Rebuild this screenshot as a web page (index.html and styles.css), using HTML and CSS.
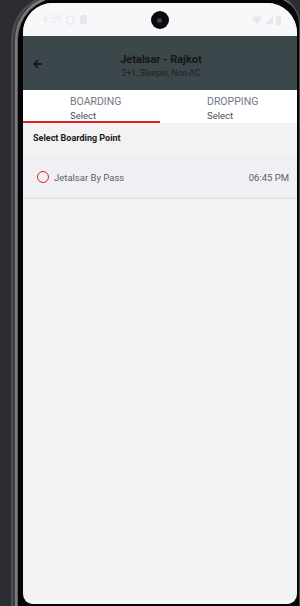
FILE: index.html
```html
<!DOCTYPE html>
<html lang="en">
  <head>
    <meta charset="UTF-8" />
    <meta name="viewport" content="width=device-width, initial-scale=1.0" />
    <title>Boarding Point</title>
    <link rel="stylesheet" href="styles.css">
  </head>
  <body>
    <div class="phone">
      <div class="ring">
        <div class="bezel">
          <div class="screen">
            <div class="status-bar">
              <div class="status-left">
                <span class="clock">4:39</span>
                <svg width="9" height="10" viewBox="0 0 9 10">
                  <path d="M4.5 0.8 L8 2.2 V5 C8 7.2 6.4 8.7 4.5 9.3 C2.6 8.7 1 7.2 1 5 V2.2 Z" fill="none" stroke="#e6e8ec" stroke-width="1.3" />
                </svg>
                <svg width="7" height="9" viewBox="0 0 7 9">
                  <path d="M2 0 H7 V9 H0 V2 Z" fill="#e6e8ec" />
                </svg>
              </div>
              <div class="camera"><span></span></div>
              <div class="status-right">
                <svg width="10" height="8" viewBox="0 0 10 8">
                  <path d="M0 2 C3 -0.6 7 -0.6 10 2 L5 8 Z" fill="#e6e8ec" />
                </svg>
                <svg width="8" height="8" viewBox="0 0 8 8">
                  <path d="M8 0 V8 H0 Z" fill="#e6e8ec" />
                </svg>
                <svg width="5" height="10" viewBox="0 0 5 10">
                  <rect x="0" y="1" width="5" height="9" rx="1" fill="#e6e8ec" />
                  <rect x="1.5" y="0" width="2" height="1.5" fill="#e6e8ec" />
                </svg>
              </div>
            </div>

            <div class="header">
              <svg class="back" width="10" height="10" viewBox="0 0 10 10">
                <path d="M9 5 H1.5 M5 1.2 L1.2 5 L5 8.8" fill="none" stroke="#111" stroke-width="1.5" />
              </svg>
              <div class="route">
                <div class="route-name">Jetalsar - Rajkot</div>
                <div class="bus-type">2+1, Sleeper, Non-AC</div>
              </div>
            </div>

            <div class="tabs">
              <div class="tab active">
                <div class="tab-title">BOARDING</div>
                <div class="tab-value">Select</div>
              </div>
              <div class="tab">
                <div class="tab-title">DROPPING</div>
                <div class="tab-value">Select</div>
              </div>
            </div>

            <div class="content">
              <div class="section-title">Select Boarding Point</div>
              <div class="point">
                <span class="radio"></span>
                <span class="point-name">Jetalsar By Pass</span>
                <span class="point-time">06:45 PM</span>
              </div>
            </div>

            <div class="nav-bar"></div>
          </div>
        </div>
      </div>
    </div>
  </body>
</html>
```

FILE: styles.css
```css
body {
  margin: 0;
  height: 606px;
  overflow: hidden;
  background-color: #2b2d33;
  font-family: Roboto, "Liberation Sans", sans-serif;
}

.phone {
  box-sizing: border-box;
  margin-left: 11px;
  margin-top: -6px;
  width: 289px;
  height: 612px;
  border-radius: 46px 30px 0 0;
  background-color: #4c4c4e;
  padding: 2px 1px 0 2px;
}

.ring {
  box-sizing: border-box;
  height: 100%;
  border-radius: 44px 28px 0 0;
  background-color: #7b7b7d;
  padding: 2px 0 0 2px;
  border-left: 2px solid #3e3e40;
}

.bezel {
  box-sizing: border-box;
  height: 100%;
  border-radius: 42px 26px 0 0;
  background-color: #050505;
  padding: 5px 2px 2px 5px;
  border-left: 1px solid #5a5a5c;
}

.screen {
  height: 100%;
  border-radius: 30px 30px 10px 10px;
  overflow: hidden;
  background-color: #f2f2f2;
  display: flex;
  flex-direction: column;
}

.status-bar {
  flex-shrink: 0;
  height: 33px;
  background-color: #f7f8fa;
  display: flex;
  align-items: center;
  justify-content: space-between;
  padding: 0 16px 0 19px;
  position: relative;
}

.status-left,
.status-right {
  display: flex;
  align-items: center;
  gap: 5px;
}

.status-right {
  gap: 3px;
}

.clock {
  font-size: 10px;
  color: #e6e8ec;
}

.camera {
  position: absolute;
  left: 128px;
  top: 8px;
  width: 18px;
  height: 18px;
  border-radius: 50%;
  background-color: #0b0b0d;
}

.camera span {
  position: absolute;
  left: 6px;
  top: 7px;
  width: 5px;
  height: 5px;
  border-radius: 50%;
  background-color: #3d3a5c;
}

.header {
  flex-shrink: 0;
  box-sizing: border-box;
  height: 54px;
  padding-top: 4px;
  background-color: #3c474b;
  display: flex;
  align-items: center;
  position: relative;
}

.back {
  position: absolute;
  left: 10px;
  top: 23px;
}

.route {
  flex: 1;
  text-align: center;
  padding-left: 2px;
}

.route-name {
  font-size: 11px;
  font-weight: bold;
  color: #151515;
}

.bus-type {
  margin-top: 2px;
  font-size: 8.5px;
  color: #222;
}

.tabs {
  flex-shrink: 0;
  display: flex;
  height: 33px;
  background-color: #fff;
}

.tab {
  flex: 1;
  padding: 5px 0 0 47px;
  box-sizing: border-box;
}

.tab.active {
  border-bottom: 2px solid #e21f26;
}

.tab-title {
  font-size: 10.5px;
  color: #6f7885;
}

.tab-value {
  margin-top: 2px;
  font-size: 9.5px;
  color: #4a4f57;
}

.content {
  flex: 1;
  padding-top: 10px;
}

.section-title {
  padding-left: 10px;
  font-size: 9px;
  font-weight: bold;
  color: #1a1a1a;
}

.point {
  margin-top: 14px;
  height: 40px;
  background-color: #efeff4;
  border-bottom: 2px solid #e4e4e8;
  display: flex;
  align-items: center;
  padding: 0 8px 0 14px;
}

.radio {
  width: 10px;
  height: 10px;
  border: 1.5px solid #e21f26;
  border-radius: 50%;
}

.point-name {
  margin-left: 5px;
  font-size: 9.5px;
  color: #5d5f66;
  flex: 1;
}

.point-time {
  font-size: 9.5px;
  color: #5d5f66;
}

.nav-bar {
  flex-shrink: 0;
  height: 4px;
  background-color: #f6f8fb;
}
```
